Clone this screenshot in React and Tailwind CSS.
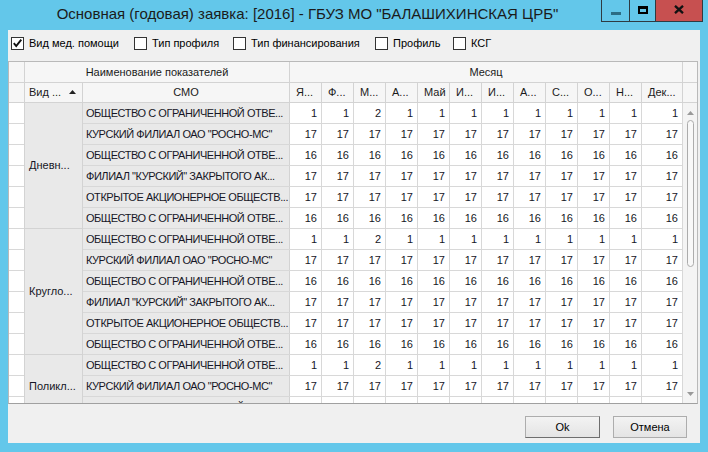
import React from "react";

const months = ["Я...", "Ф...", "М...", "А...", "Май", "И...", "И...", "А...", "С...", "О...", "Н..."];

const smo = [
  "ОБЩЕСТВО С ОГРАНИЧЕННОЙ ОТВЕ...",
  'КУРСКИЙ ФИЛИАЛ ОАО "РОСНО-МС"',
  "ОБЩЕСТВО С ОГРАНИЧЕННОЙ ОТВЕ...",
  'ФИЛИАЛ "КУРСКИЙ" ЗАКРЫТОГО АК...',
  "ОТКРЫТОЕ АКЦИОНЕРНОЕ ОБЩЕСТВ...",
  "ОБЩЕСТВО С ОГРАНИЧЕННОЙ ОТВЕ...",
];

const firstRow = [1, 1, 2, 1, 1, 1, 1, 1, 1, 1, 1, 1];
const groupVals = [firstRow, Array(12).fill(17), Array(12).fill(16), Array(12).fill(17), Array(12).fill(17), Array(12).fill(16)];

const rows = [];
for (let g = 0; g < 3; g++) {
  const n = g === 2 ? 3 : 6;
  for (let i = 0; i < n; i++) rows.push({ name: smo[i], vals: groupVals[i] });
}

const checks = [
  { label: "Вид мед. помощи", checked: true, w: "w-[123px]" },
  { label: "Тип профиля", checked: false, w: "w-[99px]" },
  { label: "Тип финансирования", checked: false, w: "w-[142px]" },
  { label: "Профиль", checked: false, w: "w-[78px]" },
  { label: "КСГ", checked: false, w: "w-[60px]" },
];

function CheckBox({ checked }) {
  return (
    <div className="w-[13px] h-[13px] border border-[#333333] bg-white flex items-center justify-center shrink-0">
      {checked && (
        <svg width="11" height="11" viewBox="0 0 11 11">
          <path d="M1.8 5.2 L4.2 8 L9.3 1.6" fill="none" stroke="#111" strokeWidth="1.9" />
        </svg>
      )}
    </div>
  );
}

export default function App() {
  return (
    <div className="w-[708px] h-[452px] bg-[#63c7ea] flex flex-col overflow-hidden font-['Liberation_Sans',Arial,sans-serif]">
      {/* Title bar */}
      <div className="h-[30px] flex shrink-0">
        <div className="flex-1 flex items-center justify-center pl-[14px] pb-[1px] text-[15px] text-[#1b1b1b] whitespace-nowrap">
          Основная (годовая) заявка: [2016] - ГБУЗ МО "БАЛАШИХИНСКАЯ ЦРБ"
        </div>
        <div className="flex h-[22px] border-x border-b border-[#2e3b42] mr-[5px]">
          <div className="w-[28px] border-r border-[#2e3b42] flex items-center justify-center">
            <div className="w-[10px] h-[3px] bg-[#2c6d85] mt-[5px]" />
          </div>
          <div className="w-[26px] border-r border-[#2e3b42] flex items-center justify-center">
            <div className="w-[10px] h-[8px] border-2 border-t-[3px] border-black -mt-[2px]" />
          </div>
          <div className="w-[46px] bg-[#c75050] flex items-center justify-center">
            <svg width="10" height="9" viewBox="0 0 10 9" className="-mt-[2px]">
              <path d="M1 0.8 L9 8.2 M9 0.8 L1 8.2" stroke="#111" strokeWidth="2.3" fill="none" />
            </svg>
          </div>
        </div>
      </div>

      {/* Content */}
      <div className="mx-[8px] h-[413px] bg-[#f0f0f0] flex flex-col shrink-0">
        {/* Checkbox row */}
        <div className="h-[31px] flex items-start pt-[7px] pl-[3px] text-[11px] text-black">
          {checks.map((c, i) => (
            <div key={i} className={`${c.w} flex items-center`}>
              <CheckBox checked={c.checked} />
              <span className="ml-[5px] leading-[13px] whitespace-nowrap">{c.label}</span>
            </div>
          ))}
        </div>

        {/* Grid */}
        <div className="w-[690px] h-[343px] border border-[#b9b9b9] border-b-[#a0a0a0] bg-white flex flex-col text-[11px] text-[#161626]">
          {/* Header row 1 */}
          <div className="h-[21px] flex border-b border-[#d3d3d3] bg-[#f6f6f6] shrink-0">
            <div className="w-[16px] border-r border-[#d3d3d3]" />
            <div className="w-[265px] border-r border-[#d3d3d3] flex items-center justify-center text-[#1b1b1b]">
              Наименование показателей
            </div>
            <div className="w-[393px] border-r border-[#d3d3d3] flex items-center justify-center text-[#1b1b1b]">
              Месяц
            </div>
            <div className="flex-1" />
          </div>
          {/* Header row 2 */}
          <div className="h-[20px] flex border-b border-[#d3d3d3] bg-[#f6f6f6] shrink-0 text-[#1b1b1b]">
            <div className="w-[16px] border-r border-[#d3d3d3]" />
            <div className="w-[58px] border-r border-[#d3d3d3] flex items-center pl-[4px]">
              <span>Вид ...</span>
              <svg width="7" height="4" viewBox="0 0 7 4" className="ml-[8px] -mt-[1px]">
                <path d="M0 4 L3.5 0 L7 4 Z" fill="#222" />
              </svg>
            </div>
            <div className="w-[207px] border-r border-[#d3d3d3] flex items-center justify-center">СМО</div>
            {months.map((m, i) => (
              <div key={i} className="w-[32px] border-r border-[#d3d3d3] flex items-center pl-[6px] whitespace-nowrap overflow-hidden">
                {m}
              </div>
            ))}
            <div className="w-[41px] border-r border-[#d3d3d3] flex items-center pl-[6px] whitespace-nowrap">Дек...</div>
            <div className="flex-1" />
          </div>
          {/* Body */}
          <div className="flex h-[300px] overflow-hidden">
            {/* row indicator */}
            <div className="w-[16px] border-r border-[#d3d3d3] flex flex-col shrink-0">
              {rows.map((_, i) => (
                <div key={i} className="h-[21px] border-b border-[#d8d8d8] shrink-0" />
              ))}
            </div>
            {/* group column */}
            <div className="w-[58px] border-r border-[#d3d3d3] flex flex-col shrink-0 bg-[#e9e9e9]">
              <div className="h-[126px] border-b border-[#d3d3d3] flex items-center pl-[4px] shrink-0">Дневн...</div>
              <div className="h-[126px] border-b border-[#d3d3d3] flex items-center pl-[4px] shrink-0">Кругло...</div>
              <div className="flex-1 flex items-start pl-[4px] pt-[23px]">Поликл...</div>
            </div>
            {/* data */}
            <div className="w-[600px] flex flex-col shrink-0">
              {rows.map((r, i) => (
                <div key={i} className="h-[21px] flex border-b border-[#d8d8d8] shrink-0">
                  <div className="w-[207px] border-r border-[#d3d3d3] bg-[#e9e9e9] flex items-center pl-[3px] whitespace-nowrap overflow-hidden tracking-[-0.45px]">
                    {r.name}
                  </div>
                  {r.vals.map((v, j) => (
                    <div
                      key={j}
                      className={`${j === 11 ? "w-[41px]" : "w-[32px]"} border-r border-[#d8d8d8] flex items-center justify-end pr-[4px]`}
                    >
                      {v}
                    </div>
                  ))}
                </div>
              ))}
            </div>
            {/* scrollbar */}
            <div className="flex-1 bg-[#f4f4f4] flex flex-col items-center relative">
              <svg width="7" height="4" viewBox="0 0 7 4" className="mt-[8px]">
                <path d="M0 4 L3.5 0 L7 4 Z" fill="#9a9a9a" />
              </svg>
              <div className="w-[7px] h-[147px] mt-[5px] rounded-full border border-[#acacac] bg-[#f8f8f8]" />
              <div className="flex-1" />
              <svg width="7" height="4" viewBox="0 0 7 4" className="mb-[7px]">
                <path d="M0 0 L7 0 L3.5 4 Z" fill="#9a9a9a" />
              </svg>
            </div>
          </div>
        </div>

        {/* Buttons */}
        <div className="flex justify-end gap-[13px] pt-[12px] pr-[13px] text-[11px] text-black">
          <button className="w-[75px] h-[22px] border border-[#adadad] border-r-[#6e6e6e] border-b-[#6e6e6e] bg-gradient-to-b from-[#f3f3f3] to-[#e4e4e4] flex items-center justify-center">
            Ok
          </button>
          <button className="w-[74px] h-[22px] border border-[#adadad] bg-gradient-to-b from-[#f3f3f3] to-[#e4e4e4] flex items-center justify-center">
            Отмена
          </button>
        </div>
      </div>
    </div>
  );
}
